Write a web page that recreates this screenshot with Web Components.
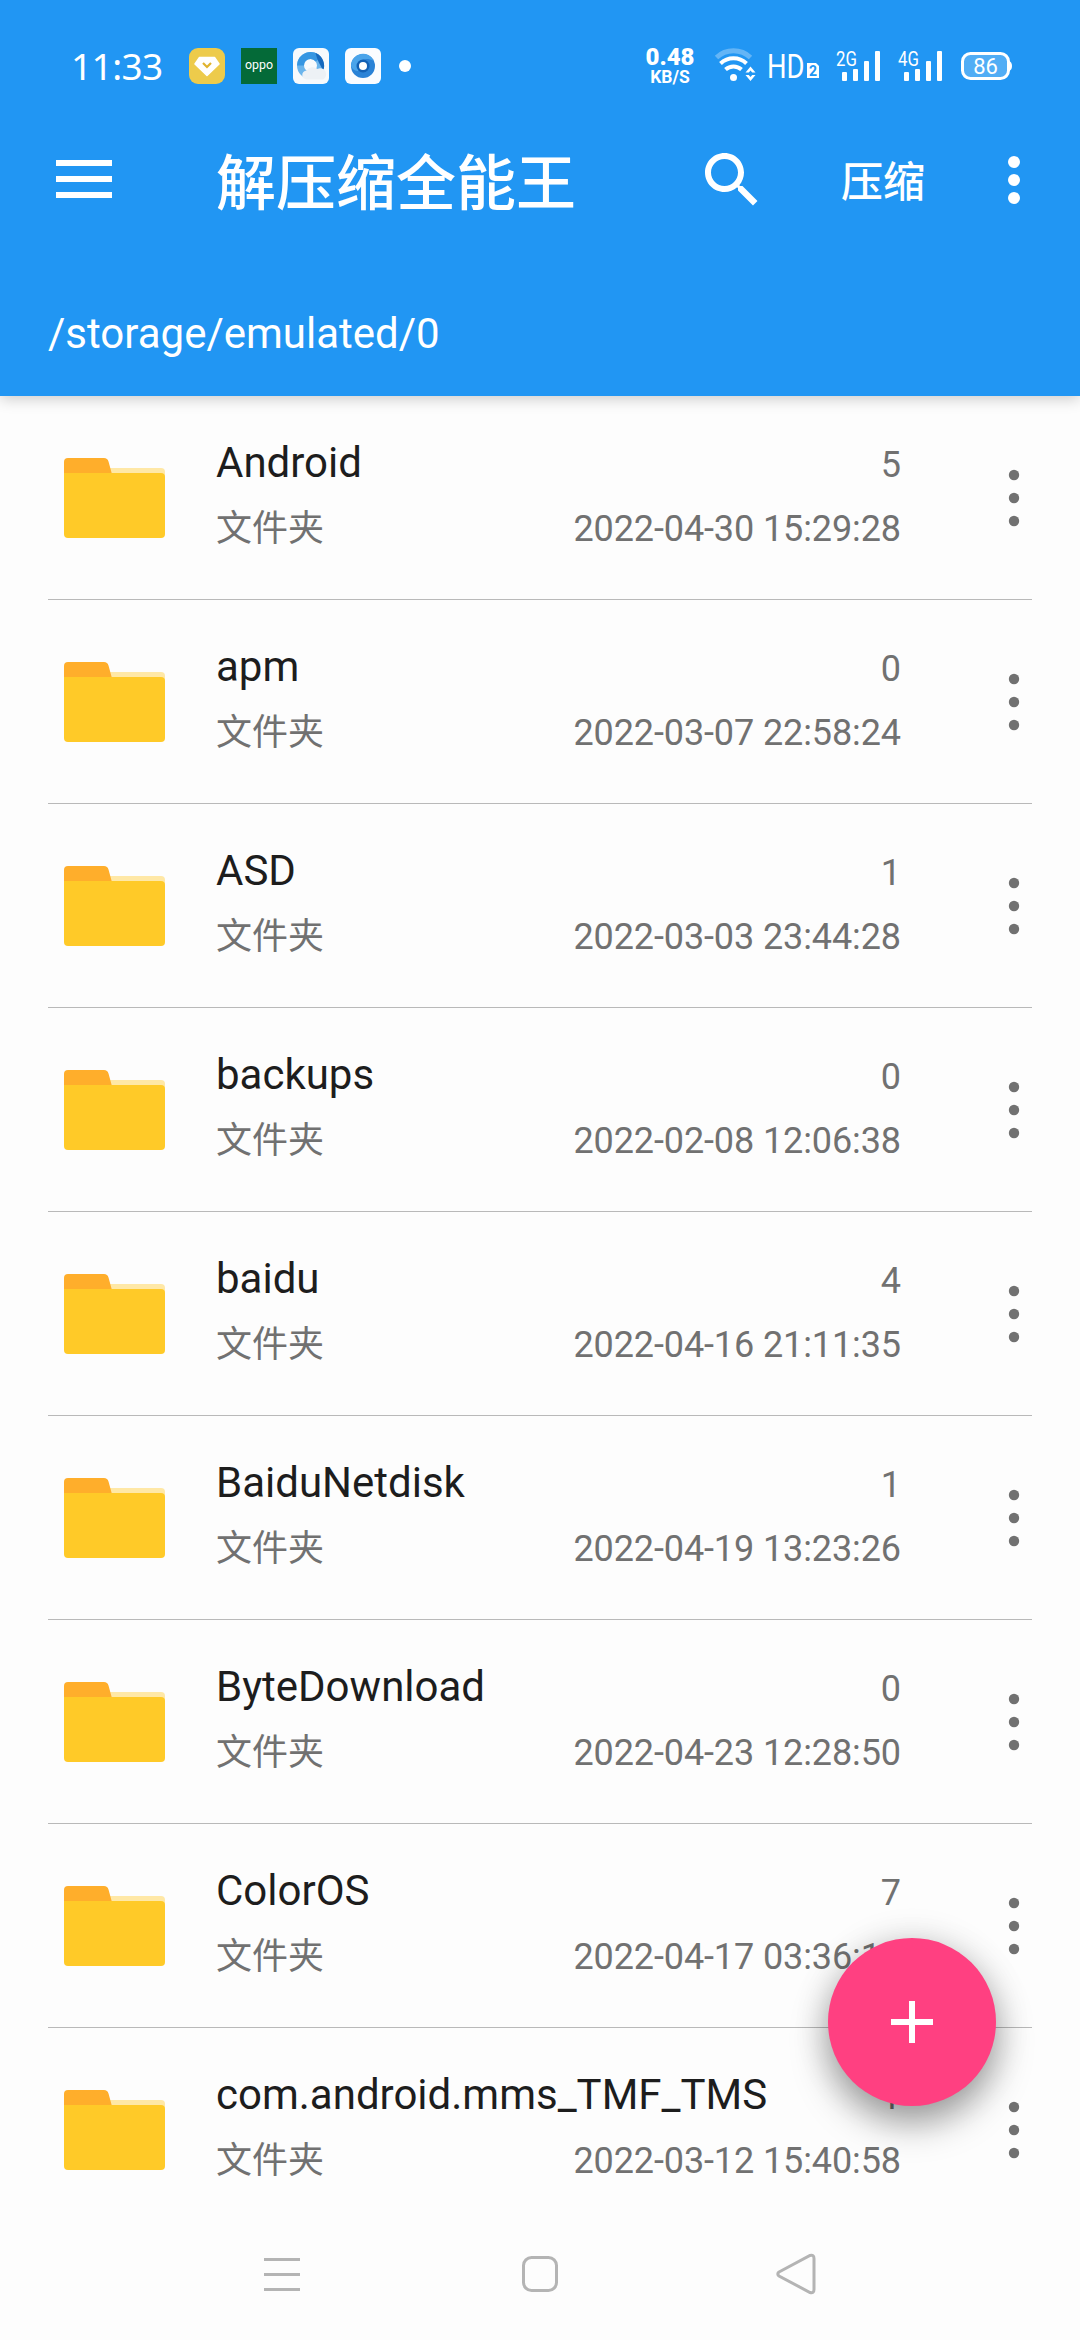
<!DOCTYPE html>
<html lang="zh-CN">
<head>
<meta charset="utf-8">
<title>解压缩全能王</title>
<style>
    html, body{
        margin: 0;
        height: 100%;
    }
    body{
        font-family: Roboto, "Noto Sans CJK SC", sans-serif;
        background: #fdfdfd;
        overflow: hidden;
    }
</style>
</head>
<body>
<file-manager></file-manager>

<script>
class StatusBar extends HTMLElement{
    constructor(){
        super()
        this.attachShadow({mode : 'open'})
    }
    getStyles(){
        return `
            <style>
                :host{
                    display: flex;
                    justify-content: space-between;
                    align-items: center;
                    height: 132px;
                    box-sizing: border-box;
                    padding: 0 68px 0 71px;
                    color: #fff;
                }
                .left, .right{
                    display: flex;
                    align-items: center;
                }
                .time{
                    width: 118px;
                    font: 37px/44px "Noto Sans", sans-serif;
                    letter-spacing: -.6px;
                    white-space: nowrap;
                }
                .apps{
                    display: flex;
                    align-items: center;
                    gap: 16px;
                }
                .dot{
                    width: 12px;
                    height: 12px;
                    margin-left: 2px;
                    border-radius: 50%;
                    background: #fff;
                }
                .speed{
                    width: 50px;
                    margin-right: 20px;
                    text-align: center;
                    font-weight: 700;
                    font-size: 17.500px;
                    line-height: 18px;
                }
                .speed b{
                    display: block;
                    font-size: 24px;
                    line-height: 21px;
                }
                svg{
                    display: block;
                    overflow: visible;
                }
                .right svg{
                    fill: #fff;
                }
            </style>
        `
    }
    getSignal(label){
        return `
            <svg width="46" height="36" viewBox="0 0 46 36">
                <text transform="translate(0 18) scale(.84 1)" font-size="20">${label}</text>
                <rect x="6" y="24" width="5" height="9" rx="1"/>
                <rect x="17" y="21" width="5" height="12" rx="1"/>
                <rect x="28" y="13" width="5" height="20" rx="1"/>
                <rect x="39" y="3" width="5" height="30" rx="1"/>
            </svg>
        `
    }
    render(){
        this.shadowRoot.innerHTML = `
            ${this.getStyles()}
            <div class="left">
                <div class="time">11:33</div>
                <div class="apps">
                    <svg width="36" height="36" viewBox="0 0 36 36">
                        <rect width="36" height="36" rx="9" fill="#edcb4b"/>
                        <path d="M10.500 9.500h15l4.500 6.500-12 11.500L6 16z" fill="#fff" stroke="#fff" stroke-width="1.500" stroke-linejoin="round"/>
                        <path d="M14 15l4 4 4-4" fill="none" stroke="#e0b32e" stroke-width="2.200"/>
                    </svg>
                    <svg width="36" height="36" viewBox="0 0 36 36">
                        <rect width="36" height="36" fill="#046a38"/>
                        <text x="4" y="20.500" font-size="12" textLength="28" lengthAdjust="spacingAndGlyphs" fill="#fff">oppo</text>
                    </svg>
                    <svg width="36" height="36" viewBox="0 0 36 36">
                        <rect width="36" height="36" rx="6" fill="#f7fafc"/>
                        <circle cx="17.500" cy="17.500" r="10" fill="none" stroke="#6bb5ec" stroke-width="7"/>
                        <path d="M7.500 17.500a10 10 0 0 1 18-6" fill="none" stroke="#3596e2" stroke-width="7"/>
                        <path d="M22.500 5a13.500 13.500 0 0 1 7.500 18c-1-4-4-7-6-13z" fill="#1769bd"/>
                        <path d="M14 31.500a4.500 4.500 0 0 1-.5-9 7.500 7.500 0 0 1 11-1.500 5.500 5.500 0 0 1 5.500 10.500z" fill="#edf1f5"/>
                    </svg>
                    <svg width="36" height="36" viewBox="0 0 36 36">
                        <rect width="36" height="36" rx="6" fill="#fafcff"/>
                        <circle cx="18" cy="18" r="12" fill="#2a82d6"/>
                        <path d="M6 18A12 12 0 0 1 29 13c-6-3-11-2-13 0-4 2-4 7-2 10-4 0-7-2-8-5z" fill="#4aa4ea"/>
                        <circle cx="18" cy="18" r="6.500" fill="#1260b4"/>
                        <circle cx="18" cy="18" r="4" fill="#fff"/>
                    </svg>
                    <div class="dot"></div>
                </div>
            </div>
            <div class="right">
                <div class="speed"><b>0.48</b>KB/S</div>
                <svg width="41" height="36" viewBox="0 0 41 36">
                    <g fill="none" stroke="#fff">
                        <path d="M1.500 9.500a25 25 0 0 1 34 0" stroke-width="5" opacity=".3"/>
                        <path d="M5.500 15.500a19 19 0 0 1 26 0" stroke-width="4"/>
                        <path d="M10.500 21.500a12 12 0 0 1 16 0" stroke-width="4"/>
                    </g>
                    <circle cx="18.500" cy="29.500" r="3.500"/>
                    <path d="M30.500 24.500l5-6 5 6h-3.300l-1.700-2-1.700 2zM30.500 27l5 6 5-6h-3.300l-1.700 2-1.700-2z"/>
                </svg>
                <svg width="52" height="36" viewBox="0 0 52 36" style="margin-left:12px">
                    <text transform="translate(-1 30) scale(.82 1)" font-size="33.500">HD</text>
                    <path d="M39 15h9l3 3v12H39z"/>
                    <text x="45" y="28" font-size="14" font-weight="700" text-anchor="middle" style="fill:#2096f3">2</text>
                </svg>
                <div style="width:16px"></div>
                ${this.getSignal('2G')}
                <div style="width:16px"></div>
                ${this.getSignal('4G')}
                <svg width="51" height="36" viewBox="0 0 51 36" style="margin-left:17px">
                    <rect x="1.500" y="5.500" width="46" height="25" rx="8" fill="#fff" fill-opacity=".22" stroke="#fff" stroke-width="3"/>
                    <path d="M48 13q3 1 3 5t-3 5z"/>
                    <text x="24.500" y="26" font-size="22" text-anchor="middle">86</text>
                </svg>
            </div>
        `
    }
    connectedCallback(){
        this.render()
    }
}

class AppToolbar extends HTMLElement{
    constructor(){
        super()
        this.attachShadow({mode : 'open'})
    }
    getStyles(){
        return `
            <style>
                :host{
                    display: flex;
                    align-items: center;
                    height: 96px;
                    padding: 0 48px;
                    color: #fff;
                }
                svg{
                    display: block;
                    fill: #fff;
                }
                .title{
                    flex: 1;
                    margin-left: 96px;
                    padding-top: 10px;
                    font-size: 60px;
                    line-height: 72px;
                    font-weight: 500;
                }
                .action{
                    margin: 0 59px 0 73px;
                    padding-top: 5px;
                    font-size: 42px;
                    line-height: 60px;
                    font-weight: 500;
                }
            </style>
        `
    }
    render(){
        this.shadowRoot.innerHTML = `
            ${this.getStyles()}
            <svg width="72" height="72" viewBox="0 0 72 72">
                <path d="M8 16h56v6H8zM8 32h56v6H8zM8 48h56v6H8z"/>
            </svg>
            <div class="title"><slot></slot></div>
            <svg width="72" height="72" viewBox="0 0 24 24">
                <path d="M15.500 14h-.79l-.28-.27C15.410 12.590 16 11.110 16 9.500 16 5.910 13.090 3 9.500 3S3 5.910 3 9.500 5.910 16 9.500 16c1.610 0 3.090-.59 4.230-1.570l.27.28v.79l5 4.990L20.490 19l-4.990-5zm-6 0C7.010 14 5 11.990 5 9.500S7.010 5 9.500 5 14 7.010 14 9.500 11.990 14 9.500 14z"/>
            </svg>
            <div class="action"><slot name="action"></slot></div>
            <svg width="48" height="72" viewBox="0 0 48 72">
                <circle cx="30" cy="18" r="6"/>
                <circle cx="30" cy="36" r="6"/>
                <circle cx="30" cy="54" r="6"/>
            </svg>
        `
    }
    connectedCallback(){
        this.render()
    }
}

class FileRow extends HTMLElement{
    constructor(){
        super()
        this.attachShadow({mode : 'open'})
    }
    getStyles(){
        return `
            <style>
                :host{
                    display: flex;
                    align-items: center;
                    height: 204px;
                    box-sizing: border-box;
                    margin: 0 48px;
                    border-bottom: 1px solid #b9b9b9;
                    color: #717171;
                    font-size: 36px;
                }
                svg{
                    display: block;
                    flex: none;
                }
                .info{
                    flex: 1;
                    margin-left: 48px;
                    padding-bottom: 4px;
                }
                .line{
                    display: flex;
                    justify-content: space-between;
                    align-items: baseline;
                    height: 66px;
                    line-height: 66px;
                    white-space: nowrap;
                }
                .name{
                    color: #1d1d1d;
                    font-size: 42px;
                }
                .date{
                    letter-spacing: -.1px;
                }
                .more{
                    margin-left: 85px;
                    fill: #717171;
                }
            </style>
        `
    }
    render(){
        this.shadowRoot.innerHTML = `
            ${this.getStyles()}
            <svg width="120" height="120" viewBox="0 0 120 120">
                <path d="M40 30h73a4 4 0 0 1 4 4v20H40z" fill="#ffe8a6"/>
                <path d="M16 57V24q0-4 4-4h36q3.500 0 4.500 3.500L65 40v17z" fill="#ffae2b"/>
                <path d="M16 35h97a4 4 0 0 1 4 4v57a4 4 0 0 1-4 4H20a4 4 0 0 1-4-4z" fill="#ffca28"/>
            </svg>
            <div class="info">
                <div class="line"><span class="name"><slot></slot></span><span>${this.getAttribute('count')}</span></div>
                <div class="line"><span>文件夹</span><span class="date">${this.getAttribute('date')}</span></div>
            </div>
            <svg class="more" width="46" height="72" viewBox="0 0 46 72">
                <circle cx="28" cy="13" r="5.200"/>
                <circle cx="28" cy="36" r="5.200"/>
                <circle cx="28" cy="59" r="5.200"/>
            </svg>
        `
    }
    connectedCallback(){
        this.render()
    }
}

class NavBar extends HTMLElement{
    constructor(){
        super()
        this.attachShadow({mode : 'open'})
    }
    render(){
        this.shadowRoot.innerHTML = `
            <style>
                :host{
                    display: flex;
                    justify-content: space-between;
                    align-items: center;
                    height: 132px;
                    padding: 0 258px;
                    background: #fdfdfd;
                }
                svg{
                    fill: none;
                    stroke: #b4b4b4;
                    stroke-width: 3;
                }
            </style>
            <svg width="48" height="48" viewBox="0 0 48 48">
                <path d="M6 9.500h36M6 24.500h36M6 39.500h36"/>
            </svg>
            <svg width="48" height="48" viewBox="0 0 48 48">
                <rect x="7.500" y="7.500" width="33" height="33" rx="8"/>
            </svg>
            <svg width="48" height="48" viewBox="0 0 48 48">
                <path d="M5 22L36 5.500q4-1 4 3v31q0 4-4 3L5 26q-2.500-2 0-4z"/>
            </svg>
        `
    }
    connectedCallback(){
        this.render()
    }
}

class FabButton extends HTMLElement{
    constructor(){
        super()
        this.attachShadow({mode : 'open'})
    }
    render(){
        this.shadowRoot.innerHTML = `
            <style>
                :host{
                    display: flex;
                    align-items: center;
                    justify-content: center;
                    width: 168px;
                    height: 168px;
                    border-radius: 50%;
                    background: #ff4081;
                    box-shadow: 0 18px 36px rgba(0,0,0,.34), 0 2px 36px rgba(0,0,0,.14);
                }
            </style>
            <svg width="72" height="72" viewBox="0 0 24 24" fill="#fff">
                <path d="M19 13h-6v6h-2v-6H5v-2h6V5h2v6h6v2z"/>
            </svg>
        `
    }
    connectedCallback(){
        this.render()
    }
}

class FileManager extends HTMLElement{
    constructor(){
        super()
        this.attachShadow({mode : 'open'})
        this.files = [
            ['Android', 5, '2022-04-30 15:29:28'],
            ['apm', 0, '2022-03-07 22:58:24'],
            ['ASD', 1, '2022-03-03 23:44:28'],
            ['backups', 0, '2022-02-08 12:06:38'],
            ['baidu', 4, '2022-04-16 21:11:35'],
            ['BaiduNetdisk', 1, '2022-04-19 13:23:26'],
            ['ByteDownload', 0, '2022-04-23 12:28:50'],
            ['ColorOS', 7, '2022-04-17 03:36:15'],
            ['com.android.mms_TMF_TMS', 1, '2022-03-12 15:40:58']
        ]
    }
    getStyles(){
        return `
            <style>
                :host{
                    display: flex;
                    flex-direction: column;
                    width: 1080px;
                    height: 2340px;
                }
                header{
                    height: 396px;
                    background: #2196f3;
                    box-shadow: 0 3px 14px rgba(0,0,0,.2);
                    z-index: 1;
                }
                .path{
                    padding: 81px 48px 0;
                    color: #fff;
                    font-size: 42px;
                    line-height: 49px;
                }
                main{
                    flex: 1;
                    min-height: 0;
                    overflow: hidden;
                }
                fab-button{
                    position: absolute;
                    left: 828px;
                    top: 1938px;
                }
            </style>
        `
    }
    render(){
        const rows = this.files.map(([name, count, date]) =>
            `<file-row count="${count}" date="${date}">${name}</file-row>`
        ).join('')

        this.shadowRoot.innerHTML = `
            ${this.getStyles()}
            <header>
                <status-bar></status-bar>
                <app-toolbar>解压缩全能王<span slot="action">压缩</span></app-toolbar>
                <div class="path">/storage/emulated/0</div>
            </header>
            <main>${rows}</main>
            <nav-bar></nav-bar>
            <fab-button></fab-button>
        `
    }
    connectedCallback(){
        this.render()
    }
}

customElements.define('status-bar', StatusBar)
customElements.define('app-toolbar', AppToolbar)
customElements.define('file-row', FileRow)
customElements.define('nav-bar', NavBar)
customElements.define('fab-button', FabButton)
customElements.define('file-manager', FileManager)
</script>
</body>
</html>
